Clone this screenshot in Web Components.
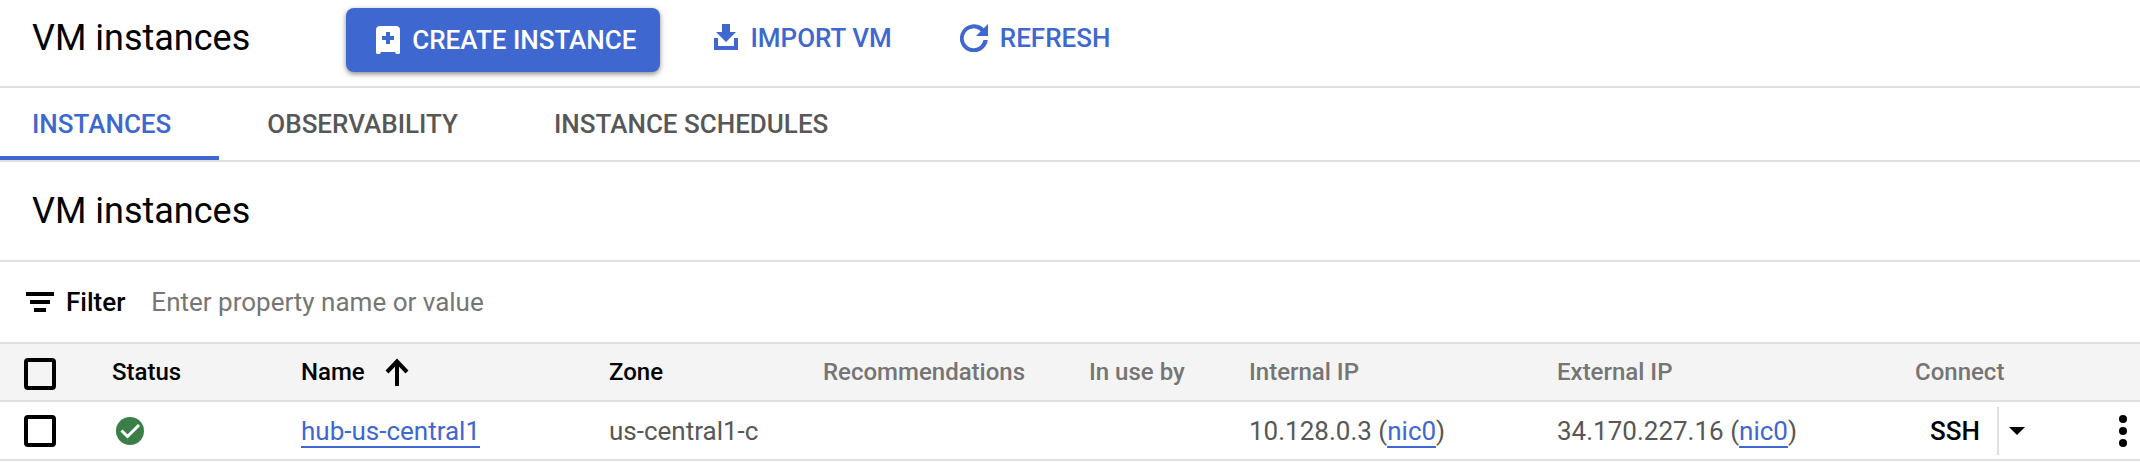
<!DOCTYPE html>
<html lang="en">
<head>
<meta charset="utf-8">
<title>VM instances</title>
<style>
  body { margin: 0; background: #fff; color: #000; font-family: Roboto, "Liberation Sans", sans-serif; font-size: 26px; }
</style>
</head>
<body>
<vm-page></vm-page>
<script>
const define = (name, html) => {
  const template = document.createElement('template');
  template.innerHTML = `<style>*{box-sizing:border-box}svg{display:block;flex:none}</style>${html.trim()}`;
  customElements.define(name, class extends HTMLElement {
    constructor() {
      super();
      this.attachShadow({ mode: 'open' }).append(template.content.cloneNode(true));
    }
  });
};

define('page-header', `
<style>
  :host { display: flex; align-items: flex-start; padding: 8px 32px 14px; border-bottom: 2px solid #e0e0e0; }
  h1 { margin: 0 96px 0 0; font-size: 36px; font-weight: 400; line-height: 60px; white-space: nowrap; }
</style>
<h1>VM instances</h1><slot></slot>`);

define('action-button', `
<style>
  :host { display: block; }
  button { display: flex; align-items: center; gap: 12px; height: 60px; padding: 0; border: 0; background: none;
    color: #3f67d0; font: 500 26px/32px Roboto, "Liberation Sans", sans-serif; white-space: nowrap; cursor: pointer; }
  :host([primary]) button { height: 64px; padding: 0 24px 0 30px; border-radius: 8px; background: #3f67d0; color: #fff;
    box-shadow: 0 2px 4px rgba(0,0,0,.35), 0 2px 8px rgba(0,0,0,.15); }
</style>
<button type="button"><slot name="icon"></slot><slot></slot></button>`);

define('tab-bar', `
<style>
  :host { display: block; border-bottom: 2px solid #e0e0e0; }
  nav { display: flex; }
</style>
<nav aria-label="VM instances"><slot></slot></nav>`);

define('tab-item', `
<style>
  :host { display: block; }
  a { display: block; padding: 0 48px; color: #575757; font-weight: 500; line-height: 72px; text-decoration: none; white-space: nowrap; }
  :host([active]) a { padding-left: 32px; color: #3f67d0; box-shadow: inset 0 -4px #3f67d0; }
</style>
<a href="#"><slot></slot></a>`);

define('section-title', `
<style>
  :host { display: block; padding: 0 32px; border-bottom: 2px solid #e0e0e0; }
  h2 { margin: 0; font-size: 36px; font-weight: 400; line-height: 98px; }
</style>
<h2><slot></slot></h2>`);

define('filter-bar', `
<style>
  :host { display: flex; align-items: center; height: 80px; padding: 0 26px; }
  label { display: flex; align-items: center; gap: 12px; margin-right: 26px; font-weight: 500; line-height: 32px; }
  input { flex: 1; min-width: 0; height: 48px; padding: 0; border: 0; outline: 0; background: none; color: #000;
    font: 400 26px/32px Roboto, "Liberation Sans", sans-serif; }
  input::placeholder { color: #767676; opacity: 1; }
</style>
<label for="filter">
  <svg width="28" height="20" viewBox="0 0 28 20"><path d="M0 0h28v4H0zM4 8h20v4H4zM8 16h12v4H8z"/></svg>
  Filter
</label>
<input id="filter" type="text" placeholder="Enter property name or value">`);

define('nic-link', `<style>
  a { color: #3f67d0; text-decoration: none; border-bottom: 2px solid #3f67d0; }
</style><a href="#"><slot></slot></a>`);

define('ssh-split', `
<style>
  :host { display: flex; align-items: center; padding-left: 15px; }
  button { border: 0; background: none; padding: 0; color: #000; font: 500 26px/32px Roboto, "Liberation Sans", sans-serif; cursor: pointer; }
  .menu { display: flex; align-items: center; height: 48px; margin-left: 17px; padding: 0 10px; border-left: 2px solid #e0e0e0; }
</style>
<button type="button">SSH</button>
<button type="button" class="menu" aria-label="More SSH options"><svg width="16" height="8" viewBox="0 0 16 8"><path d="M0 0h16L8 8z"/></svg></button>`);

define('vm-table', `
<style>
  :host { display: block; }
  table { width: 100%; table-layout: fixed; border-collapse: separate; border-spacing: 0; }
  th, td { padding: 0; text-align: left; vertical-align: middle; white-space: nowrap; border-bottom: 2px solid #e0e0e0; }
  th { height: 60px; border-top: 2px solid #e0e0e0; background: #f4f4f4; color: #757575; font-size: 24px; font-weight: 500; line-height: 32px; }
  th.on { color: #000; }
  td { height: 59px; color: #575757; line-height: 32px; }
  .pick { padding-left: 24px; }
  .pick input { display: block; width: 32px; height: 32px; margin: 0; appearance: none; border: 4px solid #000; border-radius: 4px; cursor: pointer; }
  th.pick { padding-top: 4px; }
  .sort { display: flex; align-items: center; gap: 20px; }
  .status { padding-left: 4px; }
  .more { display: flex; margin-left: auto; padding: 0 13px; border: 0; background: none; cursor: pointer; }
</style>
<table>
  <colgroup>
    <col style="width:112px"><col style="width:189px"><col style="width:308px"><col style="width:214px"><col style="width:266px">
    <col style="width:160px"><col style="width:308px"><col style="width:358px"><col style="width:160px"><col>
  </colgroup>
  <thead><tr>
    <th class="pick"><input type="checkbox" aria-label="Select all instances"></th>
    <th class="on">Status</th>
    <th class="on"><span class="sort">Name <svg width="24" height="28" viewBox="0 0 24 28"><path d="M12 28V3M2 14L12 3.500 22 14" fill="none" stroke="#000" stroke-width="4"/></svg></span></th>
    <th class="on">Zone</th><th>Recommendations</th><th>In use by</th><th>Internal IP</th><th>External IP</th><th>Connect</th><th></th>
  </tr></thead>
  <tbody><tr>
    <td class="pick"><input type="checkbox" aria-label="Select hub-us-central1"></td>
    <td class="status"><svg width="28" height="28" viewBox="0 0 28 28" role="img" aria-label="Running"><circle cx="14" cy="14" r="14" fill="#3a7f48"/><path d="M5.500 13.500l6 6L23 8" fill="none" stroke="#fff" stroke-width="3"/></svg></td>
    <td><nic-link>hub-us-central1</nic-link></td>
    <td>us-central1-c</td><td></td><td></td>
    <td>10.128.0.3 (<nic-link>nic0</nic-link>)</td>
    <td>34.170.227.16 (<nic-link>nic0</nic-link>)</td>
    <td><ssh-split></ssh-split></td>
    <td><button type="button" class="more" aria-label="More actions"><svg width="8" height="32" viewBox="0 0 8 32"><circle cx="4" cy="4" r="4"/><circle cx="4" cy="16" r="4"/><circle cx="4" cy="28" r="4"/></svg></button></td>
  </tr></tbody>
</table>`);

define('vm-page', `
<style>
  :host { display: block; }
  .import { margin-left: 54px; }
  .refresh { margin-left: 68px; }
</style>
<page-header>
  <action-button primary>
    <svg slot="icon" width="24" height="28" viewBox="0 0 24 28"><path fill="#fff" fill-rule="evenodd" d="M4 0h16a4 4 0 0 1 4 4v23l-1 1h-3l-1-2H5l-1 2H1l-1-1V4a4 4 0 0 1 4-4zM10 6v4H6v4h4v4h4v-4h4v-4h-4V6z"/></svg>
    CREATE INSTANCE
  </action-button>
  <action-button class="import">
    <svg slot="icon" width="24" height="28" viewBox="0 0 24 28"><path fill="#3f67d0" d="M8 0h8v8h6L12 18 2 8h6zM0 14h4v8h16v-8h4v12H0z"/></svg>
    IMPORT VM
  </action-button>
  <action-button class="refresh">
    <svg slot="icon" width="28" height="28" viewBox="0 0 28 28"><path fill="#3f67d0" d="M28 0v12H16l4.700-4.700A9.900 9.900 0 1 0 23.400 16H27.800A14 14 0 1 1 23.700 4.300z"/></svg>
    REFRESH
  </action-button>
</page-header>
<tab-bar>
  <tab-item active>INSTANCES</tab-item>
  <tab-item>OBSERVABILITY</tab-item>
  <tab-item>INSTANCE SCHEDULES</tab-item>
</tab-bar>
<section-title>VM instances</section-title>
<filter-bar></filter-bar>
<vm-table></vm-table>`);
</script>
</body>
</html>
